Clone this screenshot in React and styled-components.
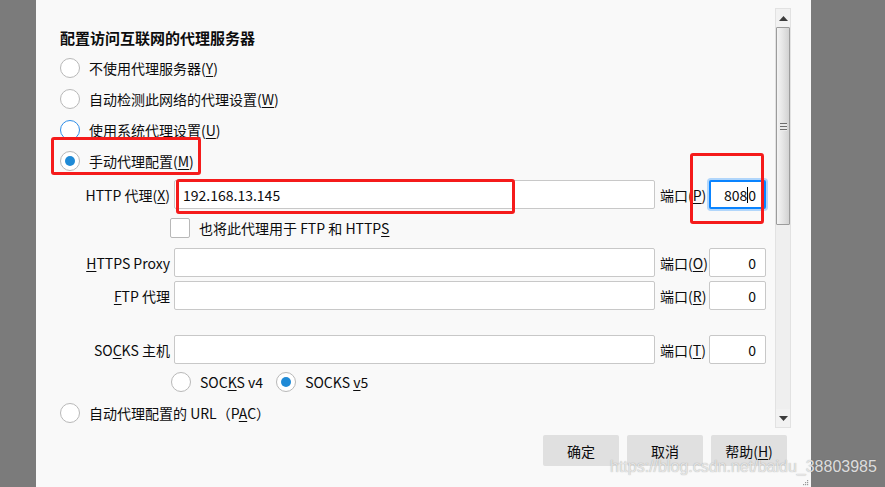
import React from "react";
import styled, { createGlobalStyle, css } from "styled-components";

const Global = createGlobalStyle`
  html, body { margin: 0; padding: 0; background: #7b7b7b; }
  * { box-sizing: border-box; }
`;

const FONT = `"Noto Sans CJK SC", "Noto Sans", sans-serif`;

const Page = styled.div`
  position: relative;
  width: 885px;
  height: 487px;
  display: flex;
  padding-left: 36px;
  background: #7b7b7b;
  overflow: hidden;
  font-family: ${FONT};
  font-size: 14px;
  line-height: 20px;
  color: #0c0c0d;
`;

const Dialog = styled.div`
  position: relative;
  width: 775px;
  height: 487px;
  background: #f9f9f9;
  display: flex;
  flex-direction: column;
`;

const Body = styled.div`
  display: flex;
  align-items: flex-start;
`;

const Main = styled.div`
  width: 730px;
  padding: 28px 0 0 24px;
  display: flex;
  flex-direction: column;
`;

const Heading = styled.div`
  font-size: 15px;
  font-weight: 700;
  line-height: 20px;
  margin-bottom: 4px;
`;

const Key = styled.span`
  text-decoration: underline;
  text-underline-offset: 2px;
  text-decoration-thickness: 1px;
`;

const Option = styled.div`
  display: flex;
  align-items: center;
  gap: 9px;
  height: 31px;
  margin-top: ${(p) => p.$mt || 0}px;
  white-space: nowrap;
`;

const Radio = styled.span`
  position: relative;
  flex: none;
  width: 20px;
  height: 20px;
  border-radius: 50%;
  background: #fff;
  border: 1px solid ${(p) => (p.$hover ? "#2f8ee8" : "#b8b8b8")};
  ${(p) =>
    p.$checked &&
    css`
      &::after {
        content: "";
        position: absolute;
        left: 4px;
        top: 4px;
        width: 10px;
        height: 10px;
        border-radius: 50%;
        background: #1f8ad6;
      }
    `}
`;

const FieldRow = styled.div`
  display: grid;
  grid-template-columns: 110px 481px 46px 57px;
  column-gap: 4px;
  align-items: center;
  height: 29px;
  margin-top: ${(p) => p.$mt || 0}px;
`;

const FieldLabel = styled.span`
  text-align: right;
  white-space: nowrap;
`;

const PortLabel = styled.span`
  white-space: nowrap;
  padding-left: 1px;
`;

const Field = styled.div`
  height: 29px;
  border: 1px solid #c8c8c8;
  border-radius: 2px;
  background: #fff;
  display: flex;
  align-items: center;
  justify-content: ${(p) => (p.$right ? "flex-end" : "flex-start")};
  padding: ${(p) => (p.$right ? "0 9px 0 0" : "0 0 0 8px")};
  white-space: nowrap;
  ${(p) =>
    p.$focused &&
    css`
      border: 2px solid #0a84ff;
      box-shadow: 0 0 0 2px rgba(10, 132, 255, 0.3);
      padding-right: 8px;
    `}
`;

const Caret = styled.span`
  display: inline-block;
  width: 1px;
  height: 16px;
  background: #000;
  vertical-align: middle;
`;

const CheckRow = styled.div`
  display: flex;
  align-items: center;
  gap: 9px;
  height: 20px;
  margin-top: 9px;
  padding-left: 110px;
`;

const Checkbox = styled.span`
  width: 20px;
  height: 20px;
  border: 1px solid #b8b8b8;
  border-radius: 2px;
  background: #fff;
`;

const VersionRow = styled.div`
  display: flex;
  align-items: center;
  gap: 13px;
  height: 20px;
  margin-top: 8px;
  padding-left: 111px;
`;

const VersionItem = styled.div`
  display: flex;
  align-items: center;
  gap: 9px;
`;

const Scrollbar = styled.div`
  margin: 8px 0 0 9px;
  width: 16px;
  height: 420px;
  display: flex;
  flex-direction: column;
  background: #efefef;
  border: 1px solid #e2e2e2;
`;

const ScrollButton = styled.div`
  height: 18px;
  display: flex;
  align-items: center;
  justify-content: center;
  background: #f2f2f2;
`;

const Thumb = styled.div`
  height: 198px;
  border: 1px solid #9c9c9c;
  border-radius: 1px;
  background: linear-gradient(to right, #f4f4f4, #e6e6e6 45%, #d2d2d2);
  display: flex;
  align-items: flex-end;
  justify-content: center;
  padding-bottom: 93px;
`;

const Grip = styled.div`
  width: 7px;
  height: 8px;
  background: repeating-linear-gradient(
    to bottom,
    #6e6e6e 0,
    #6e6e6e 1px,
    #eaeaea 1px,
    #eaeaea 3px
  );
`;

const Track = styled.div`
  flex: 1;
`;

const ButtonRow = styled.div`
  margin-top: 7px;
  display: flex;
  justify-content: flex-end;
  gap: 8px;
  padding-right: 24px;
`;

const Button = styled.div`
  width: 76px;
  height: 31px;
  border-radius: 2px;
  background: #e0e0e0;
  display: flex;
  align-items: center;
  justify-content: center;
  white-space: nowrap;
`;

const Annotation = styled.div`
  position: absolute;
  left: ${(p) => p.$x}px;
  top: ${(p) => p.$y}px;
  width: ${(p) => p.$w}px;
  height: ${(p) => p.$h}px;
  border: 3px solid #f51b1b;
  border-radius: 3px;
  pointer-events: none;
`;

const Watermark = styled.div`
  position: absolute;
  left: 610px;
  top: 457px;
  font-family: "Liberation Sans", Arial, sans-serif;
  font-size: 16px;
  line-height: 20px;
  color: rgba(236, 236, 236, 0.9);
  text-shadow: 0 0 1px rgba(90, 90, 90, 0.55);
  white-space: nowrap;
  pointer-events: none;
`;

const ResizeGrip = styled.svg`
  position: absolute;
  right: 2px;
  bottom: 1px;
`;

const Arrow = ({ down }) => (
  <svg width="9" height="5" viewBox="0 0 9 5">
    <path d={down ? "M0 0 H9 L4.5 5 Z" : "M0 5 H9 L4.5 0 Z"} fill="#3c3c3c" />
  </svg>
);

export default function App() {
  return (
    <>
      <Global />
      <Page>
        <Dialog>
          <Body>
            <Main>
              <Heading>配置访问互联网的代理服务器</Heading>
              <Option>
                <Radio />
                <span>
                  不使用代理服务器(<Key>Y</Key>)
                </span>
              </Option>
              <Option>
                <Radio />
                <span>
                  自动检测此网络的代理设置(<Key>W</Key>)
                </span>
              </Option>
              <Option>
                <Radio $hover />
                <span>
                  使用系统代理设置(<Key>U</Key>)
                </span>
              </Option>
              <Option>
                <Radio $checked />
                <span>
                  手动代理配置(<Key>M</Key>)
                </span>
              </Option>

              <FieldRow $mt={4}>
                <FieldLabel>
                  HTTP 代理(<Key>X</Key>)
                </FieldLabel>
                <Field>192.168.13.145</Field>
                <PortLabel>
                  端口(<Key>P</Key>)
                </PortLabel>
                <Field $right $focused>
                  808
                  <Caret />0
                </Field>
              </FieldRow>

              <CheckRow>
                <Checkbox />
                <span>
                  也将此代理用于 FTP 和 HTTP<Key>S</Key>
                </span>
              </CheckRow>

              <FieldRow $mt={10}>
                <FieldLabel>
                  <Key>H</Key>TTPS Proxy
                </FieldLabel>
                <Field />
                <PortLabel>
                  端口(<Key>O</Key>)
                </PortLabel>
                <Field $right>0</Field>
              </FieldRow>

              <FieldRow $mt={4}>
                <FieldLabel>
                  <Key>F</Key>TP 代理
                </FieldLabel>
                <Field />
                <PortLabel>
                  端口(<Key>R</Key>)
                </PortLabel>
                <Field $right>0</Field>
              </FieldRow>

              <FieldRow $mt={25}>
                <FieldLabel>
                  SO<Key>C</Key>KS 主机
                </FieldLabel>
                <Field />
                <PortLabel>
                  端口(<Key>T</Key>)
                </PortLabel>
                <Field $right>0</Field>
              </FieldRow>

              <VersionRow>
                <VersionItem>
                  <Radio />
                  <span>
                    SOC<Key>K</Key>S v4
                  </span>
                </VersionItem>
                <VersionItem>
                  <Radio $checked />
                  <span>
                    SOCKS <Key>v</Key>5
                  </span>
                </VersionItem>
              </VersionRow>

              <Option $mt={5}>
                <Radio />
                <span>
                  自动代理配置的 URL（P<Key>A</Key>C）
                </span>
              </Option>
            </Main>

            <Scrollbar>
              <ScrollButton>
                <Arrow />
              </ScrollButton>
              <Thumb>
                <Grip />
              </Thumb>
              <Track />
              <ScrollButton>
                <Arrow down />
              </ScrollButton>
            </Scrollbar>
          </Body>

          <ButtonRow>
            <Button>确定</Button>
            <Button>取消</Button>
            <Button>
              帮助(<Key>H</Key>)
            </Button>
          </ButtonRow>

          <ResizeGrip width="6" height="6" viewBox="0 0 6 6">
            <rect x="4" y="0" width="1.2" height="1.2" fill="#999" />
            <rect x="2" y="2" width="1.2" height="1.2" fill="#999" />
            <rect x="4" y="2" width="1.2" height="1.2" fill="#999" />
            <rect x="0" y="4" width="1.2" height="1.2" fill="#999" />
            <rect x="2" y="4" width="1.2" height="1.2" fill="#999" />
            <rect x="4" y="4" width="1.2" height="1.2" fill="#999" />
          </ResizeGrip>
        </Dialog>

        <Annotation $x={51} $y={137} $w={150} $h={38} />
        <Annotation $x={176} $y={179} $w={339} $h={35} />
        <Annotation $x={690} $y={153} $w={74} $h={71} />

        <Watermark>https://blog.csdn.net/baidu_38803985</Watermark>
      </Page>
    </>
  );
}
